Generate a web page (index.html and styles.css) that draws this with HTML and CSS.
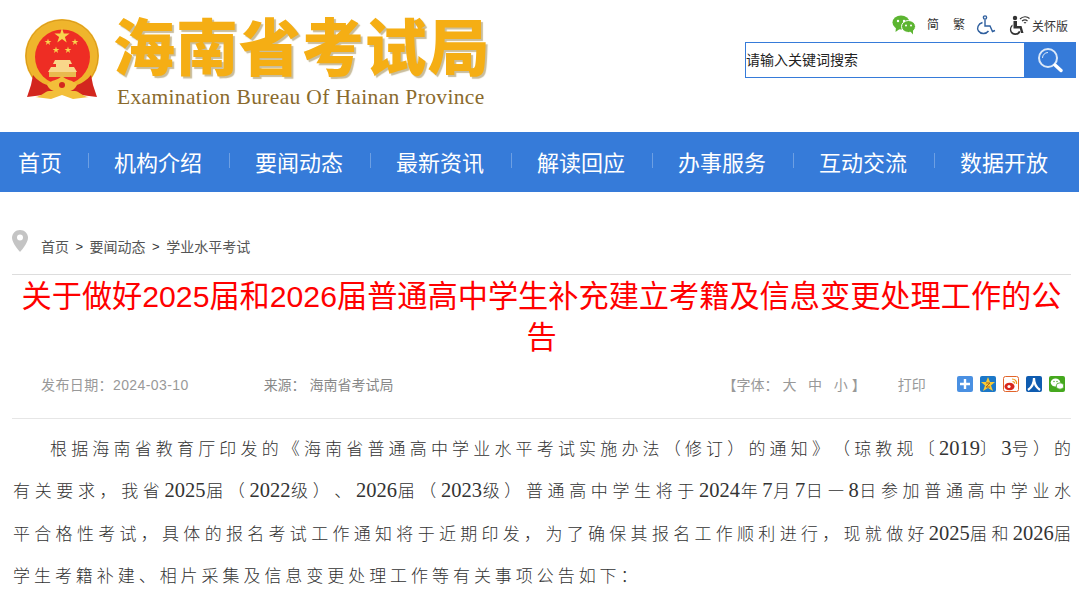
FILE: index.html
```html
<!DOCTYPE html>
<html lang="zh-CN">
<head>
    <meta charset="UTF-8">
    <title>关于做好2025届和2026届普通高中学生补充建立考籍及信息变更处理工作的公告</title>
    <link rel="stylesheet" href="styles.css">
</head>
<body>

<!-- Header -->
<div class="header">
    <div class="logo">
        <svg class="emblem" width="74" height="82" viewBox="0 0 74 82">
            <defs>
                <polygon id="star" points="0,-10 2.2,-3.1 9.5,-3.1 3.6,1.2 5.9,8.1 0,3.8 -5.9,8.1 -3.6,1.2 -9.5,-3.1 -2.2,-3.1"/>
            </defs>
            <circle cx="37" cy="37" r="37" fill="#efb52c"/>
            <circle cx="37" cy="37" r="36" fill="none" stroke="#d99a1c" stroke-width="1"/>
            <circle cx="37.500" cy="38" r="27.500" fill="#ee2d24"/>
            <use href="#star" transform="translate(37,17) scale(.8)" fill="#f8d54e"/>
            <use href="#star" transform="translate(23,23) scale(.36)" fill="#f8d54e"/>
            <use href="#star" transform="translate(50,23) scale(.36)" fill="#f8d54e"/>
            <use href="#star" transform="translate(31,31) scale(.36)" fill="#f8d54e"/>
            <use href="#star" transform="translate(43,31) scale(.36)" fill="#f8d54e"/>
            <path d="M30 41 H45 L47 45 H44 V48 H49 L52 53 H23 L26 48 H31 V45 H28 Z" fill="#f8d78a"/>
            <rect x="24" y="53" width="27" height="5" fill="#e9b94e"/>
            <path d="M8 56 C16 66 26 68 37 68 C48 68 58 66 66 56 L68 66 L72 78 L56 76 L37 72 L18 76 L2 78 L6 66 Z" fill="#d3261e"/>
            <path d="M10 78 C16 78 20 72 24 72 L50 72 C54 72 58 78 64 78 L48 80 L37 76 L26 80 Z" fill="#f3bf3a"/>
            <path d="M22 66 C27 60 32 62 37 57 C42 62 47 60 52 66 C48 74 43 71 37 74 C31 71 26 74 22 66 Z" fill="#f3bf3a"/>
            <circle cx="37" cy="66" r="3" fill="#d3261e"/>
        </svg>
        <div class="logo-text">
            <div class="logo-cn">海南省考试局</div>
            <div class="logo-en">Examination Bureau Of Hainan Province</div>
        </div>
    </div>
    <div class="header-right">
        <div class="tools">
            <svg class="tool-wechat" width="24" height="20" viewBox="0 0 24 20">
                <ellipse cx="9" cy="7.500" rx="8.500" ry="7" fill="#5cb531"/>
                <path d="M4 12 L3.500 17 L9 13 Z" fill="#5cb531"/>
                <ellipse cx="16.500" cy="11.500" rx="7" ry="6" fill="#5cb531" stroke="#fff" stroke-width="1"/>
                <path d="M18 16 L21 19.500 L21 14 Z" fill="#5cb531"/>
                <circle cx="6" cy="6" r="1.200" fill="#fff"/>
                <circle cx="12" cy="6" r="1.200" fill="#fff"/>
                <circle cx="14" cy="10.500" r="1" fill="#fff"/>
                <circle cx="19" cy="10.500" r="1" fill="#fff"/>
            </svg>
            <a class="tool-link" href="#">简</a>
            <a class="tool-link" href="#">繁</a>
            <svg class="tool-access" width="20" height="20" viewBox="0 0 20 20" fill="none" stroke="#2f5f9e" stroke-width="1.400">
                <circle cx="9" cy="2.500" r="1.600"/>
                <path d="M9 4.500 V11 H14 L16.500 16.500 L19 15.500"/>
                <path d="M6.500 7.500 C2 9 0.500 13 2.500 16 C4.500 19 10 19.500 12.500 16"/>
            </svg>
            <svg class="tool-care" width="21" height="21" viewBox="0 0 21 21">
                <circle cx="6" cy="3" r="2.200" fill="#333"/>
                <path d="M4.500 6 H8 V11 H12.500 L14.500 18 H12 L10.800 13.500 H4.500 Z" fill="#333"/>
                <path d="M3.500 9.500 C-0.500 12 0 19.500 6 20 C9 20.200 10.800 18.800 11.500 16.500 L9.800 16 C8.800 19.200 2.500 19 2.200 14.500 C2.100 12.800 2.800 11.800 3.500 11.200 Z" fill="#333"/>
                <path d="M11 4 C14 1 18 1 20.500 3.500 M13 6 C15 4.500 17 4.500 18.500 6 M15 8 C15.600 7.400 16.400 7.400 17 8" fill="none" stroke="#333" stroke-width="1.100"/>
            </svg>
            <a class="tool-care-text" href="#">关怀版</a>
        </div>
        <div class="search">
            <div class="search-input">请输入关键词搜索</div>
            <div class="search-btn">
                <svg width="26" height="26" viewBox="0 0 26 26" fill="none" stroke="#fff">
                    <circle cx="11" cy="11" r="9" stroke="#dbe8f8" stroke-width="2"/>
                    <path d="M5.500 11 A5.500 5.500 0 0 1 11 5.500" stroke="#dbe8f8" stroke-width="1"/>
                    <path d="M18 18 L24 23.500" stroke-width="3.400" stroke-linecap="round"/>
                </svg>
            </div>
        </div>
    </div>
</div>

<!-- Nav -->
<div class="nav">
    <a href="#">首页</a><i></i>
    <a href="#">机构介绍</a><i></i>
    <a href="#">要闻动态</a><i></i>
    <a href="#">最新资讯</a><i></i>
    <a href="#">解读回应</a><i></i>
    <a href="#">办事服务</a><i></i>
    <a href="#">互动交流</a><i></i>
    <a href="#">数据开放</a>
</div>

<div class="main">
    <!-- Breadcrumb -->
    <div class="crumb">
        <svg class="pin" width="16" height="22" viewBox="0 0 16 22">
            <path d="M8 0 C3.500 0 0 3.500 0 8 C0 13 8 22 8 22 C8 22 16 13 16 8 C16 3.500 12.500 0 8 0 Z" fill="#c4c4c4"/>
            <circle cx="8" cy="7.500" r="3" fill="#fff"/>
        </svg>
        <a href="#">首页</a><span>&gt;</span><a href="#">要闻动态</a><span>&gt;</span><a href="#">学业水平考试</a>
    </div>

    <!-- Article -->
    <h1 class="title">关于做好2025届和2026届普通高中学生补充建立考籍及信息变更处理工作的公告</h1>

    <div class="meta">
        <span class="meta-date">发布日期：2024-03-10</span>
        <span class="meta-source">来源：&nbsp;海南省考试局</span>
        <span class="meta-font">【字体：&nbsp;大&nbsp;&nbsp;&nbsp;中&nbsp;&nbsp;&nbsp;小&nbsp;】</span>
        <span class="meta-print">打印</span>
        <div class="share">
            <svg width="16" height="16" viewBox="0 0 16 16"><rect width="16" height="16" rx="2" fill="#4a90e2"/><path d="M8 3 V13 M3 8 H13" stroke="#fff" stroke-width="2.400"/></svg>
            <svg width="16" height="16" viewBox="0 0 16 16"><rect width="16" height="16" rx="2" fill="#1c78c8"/><polygon points="8,1 10,6 15,6 11,9.500 13,15 8,12 3,15 5,9.500 1,6 6,6" fill="#f6c935"/><path d="M6 7 H10 L6 11 H10" fill="none" stroke="#a8641a" stroke-width="1"/></svg>
            <svg width="16" height="16" viewBox="0 0 16 16"><rect x=".5" y=".5" width="15" height="15" rx="2" fill="#fff" stroke="#e2642a"/><ellipse cx="6.500" cy="10.500" rx="5" ry="3.800" fill="#d9261c"/><circle cx="6" cy="10.500" r="1.600" fill="#fff"/><path d="M9 3 C12 3 14 5 13.500 8 M9.500 5.500 C11 5.500 11.700 6.500 11.500 7.500" fill="none" stroke="#f09a1a" stroke-width="1.200"/></svg>
            <svg width="16" height="16" viewBox="0 0 16 16"><rect width="16" height="16" rx="2" fill="#0f5cb0"/><path d="M8 2 C8 8 5 12 2 14 M8 2 C8 8 11 12 14 14" fill="none" stroke="#fff" stroke-width="2.200"/></svg>
            <svg width="16" height="16" viewBox="0 0 16 16"><rect width="16" height="16" rx="2" fill="#45a81e"/><ellipse cx="6.500" cy="6.500" rx="4.800" ry="4" fill="#fff"/><ellipse cx="11" cy="10" rx="3.800" ry="3.200" fill="#fff" stroke="#45a81e" stroke-width=".8"/><circle cx="5" cy="5.500" r=".7" fill="#45a81e"/><circle cx="8" cy="5.500" r=".7" fill="#45a81e"/></svg>
        </div>
    </div>

    <div class="content">
        <div class="line line-first">根据海南省教育厅印发的《海南省普通高中学业水平考试实施办法（修订）的通知》（琼教规〔<span class="num">2019</span>〕<span class="num">3</span>号）的</div>
        <div class="line">有关要求，我省<span class="num">2025</span>届（<span class="num">2022</span>级）、<span class="num">2026</span>届（<span class="num">2023</span>级）普通高中学生将于<span class="num">2024</span>年<span class="num">7</span>月<span class="num">7</span>日—<span class="num">8</span>日参加普通高中学业水</div>
        <div class="line">平合格性考试，具体的报名考试工作通知将于近期印发，为了确保其报名工作顺利进行，现就做好<span class="num">2025</span>届和<span class="num">2026</span>届</div>
        <div class="line line-last">学生考籍补建、相片采集及信息变更处理工作等有关事项公告如下：</div>
    </div>
</div>

</body>
</html>
```

FILE: styles.css
```css
/* General Styling */
body {
    margin: 0;
    background: #fff;
    font-family: "Liberation Sans", "Noto Sans CJK SC", sans-serif;
    color: #333;
    overflow-x: hidden;
    text-spacing-trim: space-all;
}

a {
    color: inherit;
    text-decoration: none;
}

/* Header */
.header {
    height: 132px;
    display: flex;
    justify-content: space-between;
}

.logo {
    display: flex;
    padding: 19px 0 0 25px;
}

.emblem {
    flex: none;
}

.logo-text {
    margin-left: 14px;
}

.logo-cn {
    margin-top: -7px;
    font-family: "Noto Sans CJK SC", sans-serif;
    font-size: 62px;
    font-weight: 900;
    line-height: 64px;
    letter-spacing: 0.900px;
    color: #f5ae14;
    text-shadow: 2px 2px 1px #c9bd9c;
    white-space: nowrap;
}

.logo-en {
    margin: 9px 0 0 4px;
    font-family: "Liberation Serif", serif;
    font-size: 21.500px;
    line-height: 24px;
    letter-spacing: 0.350px;
    color: #8a6a2c;
    white-space: nowrap;
}

.header-right {
    width: 331px;
    padding-right: 3px;
}

.tools {
    height: 34px;
    display: flex;
    align-items: center;
    padding-top: 8px;
    font-size: 12px;
    color: #333;
}

.tool-wechat {
    margin-left: 147px;
}

.tool-link {
    margin-left: 11px;
    line-height: 16px;
}

.tool-link + .tool-link {
    margin-left: 14px;
}

.tool-access {
    margin-left: 11px;
}

.tool-care {
    margin-left: 13px;
}

.tool-care-text {
    margin-left: 2px;
}

.search {
    width: 331px;
    height: 36px;
    box-sizing: border-box;
    border: 1px solid #367bd9;
    display: flex;
}

.search-input {
    flex: 1;
    font-size: 14px;
    line-height: 34px;
    color: #222;
}

.search-btn {
    width: 51px;
    background: #367bd9;
    display: flex;
    align-items: center;
    justify-content: center;
}

/* Nav */
.nav {
    height: 57px;
    background: #367bd9;
    display: flex;
    align-items: center;
    gap: 25px;
    padding: 0 0 3px 18px;
    font-size: 22px;
    color: #fff;
}

.nav a {
    white-space: nowrap;
}

.nav i {
    width: 1px;
    height: 15px;
    background: #6d9fe3;
    margin-left: 2px;
}

.nav i:nth-child(2) {
    margin-left: 1px;
}

/* Main */
.main {
    padding: 0 8px 0 12px;
}

.crumb {
    height: 83px;
    box-sizing: border-box;
    padding-top: 38px;
    border-bottom: 1px solid #ddd;
    display: flex;
    align-items: flex-start;
    font-size: 14px;
    line-height: 34px;
    color: #555;
}

.crumb span {
    margin: 0 6.500px;
    font-size: 13px;
    color: #333;
}

.pin {
    margin-right: 13px;
}

.title {
    margin: 1px 0 0;
    font-size: 30.200px;
    font-weight: normal;
    line-height: 41px;
    text-align: center;
    color: #f00;
}

.meta {
    height: 52px;
    display: flex;
    align-items: center;
    padding: 0 0 8px 29px;
    border-bottom: 1px solid #e6e6e6;
    font-size: 14px;
    color: #999;
    white-space: nowrap;
}

.meta-date {
    letter-spacing: 0.400px;
}

.meta-source {
    margin-left: 75px;
    color: #888;
}

.meta-font {
    margin-left: 329px;
}

.meta-print {
    margin-left: 32px;
}

.share {
    margin-left: 31px;
    display: flex;
    gap: 7px;
}

.content {
    margin: 8px -4px 0 1px;
    font-family: "Noto Sans CJK SC", sans-serif;
    font-size: 17px;
    font-weight: 300;
    line-height: 41.300px;
    letter-spacing: 3.950px;
    color: #333;
}

.line {
    text-align: justify;
    text-align-last: justify;
    white-space: nowrap;
}

.line-first {
    padding-left: 37px;
}

.line-last {
    text-align-last: left;
}

.num {
    font-family: "Liberation Serif", serif;
    font-size: 20.500px;
    letter-spacing: 0;
}
```
